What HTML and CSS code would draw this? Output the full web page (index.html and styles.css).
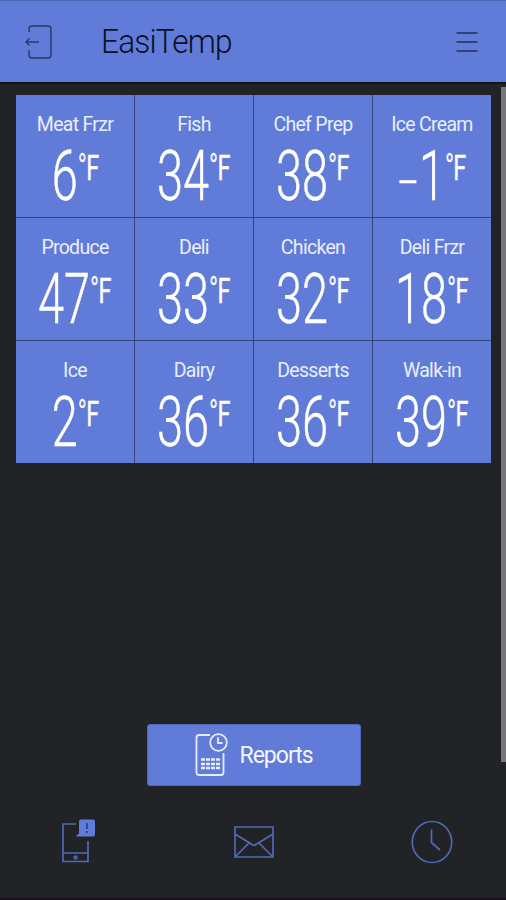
FILE: index.html
```html
<!DOCTYPE html>
<html lang="en">
<head>
    <meta charset="UTF-8">
    <meta name="viewport" content="width=device-width, initial-scale=1.0">
    <title>EasiTemp</title>
    <link rel="stylesheet" href="styles.css">
</head>
<body>
    <header class="header">
        <svg class="exit-icon" width="28" height="36" viewBox="0 0 28 36">
            <path d="M4 8V5Q4 2 7 2H23Q26 2 26 5V31Q26 34 23 34H7Q4 34 4 31V26M14 18H1M4.500 14.500L1 18L4.500 21.500"/>
        </svg>
        <h1 class="title">EasiTemp</h1>
        <svg class="menu-icon" width="22" height="20" viewBox="0 0 22 20">
            <path d="M0.500 1H21.500M0.500 10H21.500M0.500 19H21.500"/>
        </svg>
    </header>

    <main class="content">
        <div class="grid">
            <div class="cell"><p class="name">Meat Frzr</p><p class="temp">6<span class="unit"><span class="deg">°</span>F</span></p></div>
            <div class="cell"><p class="name">Fish</p><p class="temp">34<span class="unit"><span class="deg">°</span>F</span></p></div>
            <div class="cell"><p class="name">Chef Prep</p><p class="temp">38<span class="unit"><span class="deg">°</span>F</span></p></div>
            <div class="cell"><p class="name">Ice Cream</p><p class="temp"><span><span class="minus">–</span>1</span><span class="unit"><span class="deg">°</span>F</span></p></div>
            <div class="cell"><p class="name">Produce</p><p class="temp">47<span class="unit"><span class="deg">°</span>F</span></p></div>
            <div class="cell"><p class="name">Deli</p><p class="temp">33<span class="unit"><span class="deg">°</span>F</span></p></div>
            <div class="cell"><p class="name">Chicken</p><p class="temp">32<span class="unit"><span class="deg">°</span>F</span></p></div>
            <div class="cell"><p class="name">Deli Frzr</p><p class="temp">18<span class="unit"><span class="deg">°</span>F</span></p></div>
            <div class="cell"><p class="name">Ice</p><p class="temp">2<span class="unit"><span class="deg">°</span>F</span></p></div>
            <div class="cell"><p class="name">Dairy</p><p class="temp">36<span class="unit"><span class="deg">°</span>F</span></p></div>
            <div class="cell"><p class="name">Desserts</p><p class="temp">36<span class="unit"><span class="deg">°</span>F</span></p></div>
            <div class="cell"><p class="name">Walk-in</p><p class="temp">39<span class="unit"><span class="deg">°</span>F</span></p></div>
        </div>
        <div class="scrollbar"></div>
    </main>

    <button class="reports">
        <svg class="reports-icon" width="34" height="44" viewBox="0 0 34 44">
            <path d="M15 2H4Q1.500 2 1.500 4.500V39.500Q1.500 42 4 42H26Q28.500 42 28.500 39.500V20"/>
            <circle cx="23.500" cy="9.500" r="8.300"/>
            <path d="M23 4.500V10H27.500"/>
            <path class="table" d="M6 26.500H25M6 31H25M6 35H25"/>
        </svg>
        <span>Reports</span>
    </button>

    <nav class="nav">
        <svg width="34" height="46" viewBox="0 0 34 46">
            <path d="M14 5H1V42.500H26V22M1 34H26"/>
            <circle cx="13.500" cy="38.500" r="1.300"/>
            <path class="bubble" d="M19 .500H31Q33 .500 33 2.500V15Q33 17.500 31 17.500H13.500L17 14.500V2.500Q17 .500 19 .500Z"/>
            <path class="mark" d="M25 4V10M25 12V14"/>
        </svg>
        <svg width="40" height="32" viewBox="0 0 40 32">
            <path d="M1 1H39V31H1ZM1 8L18 18.500Q20 20 22 18.500L39 8M1.500 30.500L15 17M38.500 30.500L25 17"/>
        </svg>
        <svg width="42" height="44" viewBox="0 0 42 44">
            <ellipse cx="21" cy="22" rx="19.700" ry="20.500"/>
            <path d="M20.500 9.500V22.500L29 30"/>
        </svg>
    </nav>
</body>
</html>
```

FILE: styles.css
```css
* {
    box-sizing: border-box;
}

body {
    display: flex;
    flex-direction: column;
    height: 900px;
    margin: 0;
    background: #212326;
    border-bottom: 2px solid #160f1c;
    font-family: Roboto, "Liberation Sans", sans-serif;
    overflow: hidden;
}

svg {
    display: block;
    fill: none;
}

.header {
    display: flex;
    align-items: center;
    height: 84px;
    padding: 1px 28px 0 25px;
    background: #607cd8;
    border-top: 1px solid #4a69b5;
    border-bottom: 2px solid #111416;
}

.exit-icon {
    stroke: #293966;
    stroke-width: 1.4;
}

.title {
    margin: 0 auto 2px 48px;
    color: #0b1024;
    font-size: 34px;
    font-weight: 300;
    letter-spacing: -0.9px;
    line-height: 40px;
    transform: scaleX(0.93);
    transform-origin: left;
}

.menu-icon {
    stroke: #232f55;
    stroke-width: 1.6;
}

.content {
    display: flex;
    justify-content: space-between;
    height: 678px;
    padding-left: 16px;
}

.grid {
    display: grid;
    grid-template-columns: repeat(4, 118px);
    grid-template-rows: repeat(3, 122px);
    gap: 1px;
    align-self: flex-start;
    margin-top: 11px;
    background: #34447a;
}

.scrollbar {
    width: 5px;
    margin-top: 3px;
    background: #77777a;
}

.cell {
    display: flex;
    flex-direction: column;
    align-items: center;
    padding-top: 18px;
    background: #607cd8;
    color: #fff;
}

.name {
    margin: 0;
    color: #e9eeff;
    font-size: 19.5px;
    line-height: 24px;
    letter-spacing: -0.7px;
    white-space: nowrap;
}

.temp {
    display: flex;
    margin: 3px 0 0;
    font-size: 70px;
    font-weight: 300;
    line-height: 72px;
    transform: scaleX(0.67);
    -webkit-text-stroke: 0.5px #fff;
}

.minus {
    font-size: 50px;
}

.unit {
    font-size: 35px;
    font-weight: 400;
    line-height: 57px;
}

.deg {
    margin-right: -1px;
    font-size: 36px;
    font-weight: 300;
}

.reports {
    display: flex;
    align-items: center;
    align-self: center;
    gap: 11px;
    width: 214px;
    height: 62px;
    margin: -38px 0 0 1px;
    padding: 0 0 0 47px;
    border: 1px solid #4f69bd;
    border-radius: 3px;
    background: #607cd8;
    color: #f3f6ff;
    font-family: inherit;
    font-size: 23px;
    letter-spacing: -1px;
}

.reports-icon {
    stroke: #e6ecff;
    stroke-width: 1.8;
}

.reports-icon .table {
    stroke-width: 2.5;
    stroke-dasharray: 4 1;
}

.nav {
    display: flex;
    align-items: center;
    justify-content: space-between;
    height: 46px;
    margin-top: 33px;
    padding: 0 53px 0 62px;
    stroke: #5069b8;
    stroke-width: 1.7;
}

.nav .bubble {
    fill: #607cd8;
    stroke: none;
}

.nav .mark {
    stroke: #34488c;
    stroke-width: 2;
}
```
